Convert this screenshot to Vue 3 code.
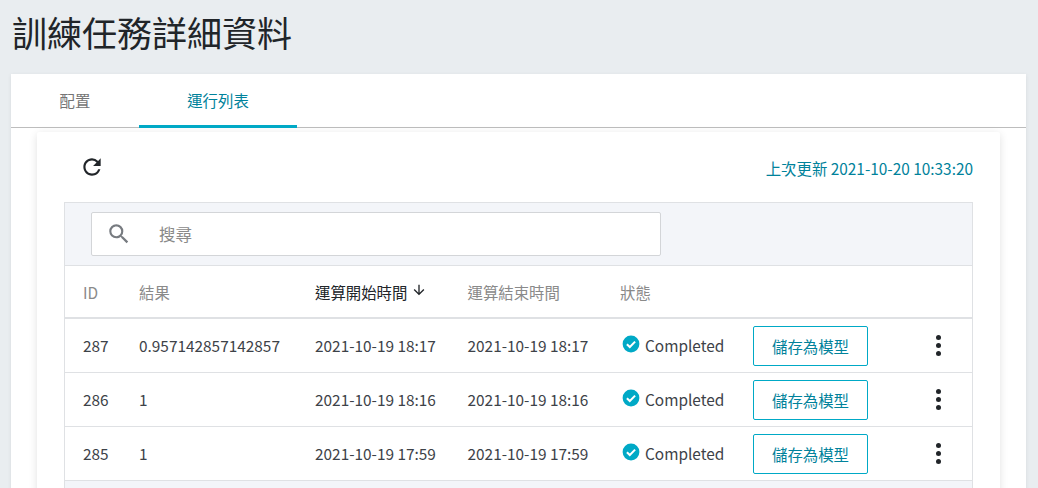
<script setup>
const rows = [
  { id: 287, result: '0.957142857142857', start: '2021-10-19 18:17', end: '2021-10-19 18:17' },
  { id: 286, result: '1', start: '2021-10-19 18:16', end: '2021-10-19 18:16' },
  { id: 285, result: '1', start: '2021-10-19 17:59', end: '2021-10-19 17:59' }
]
</script>

<template>
  <div class="page">
    <h1 class="title">訓練任務詳細資料</h1>
    <section class="card">
      <nav class="tabs">
        <div class="tab">配置</div>
        <div class="tab active">運行列表</div>
      </nav>
      <div class="inner">
        <div class="top">
          <svg class="refresh" viewBox="0 0 24 24" width="26" height="26"><path fill="#212529" d="M17.65 6.35A7.958 7.958 0 0 0 12 4c-4.42 0-7.99 3.58-7.99 8s3.57 8 7.99 8c3.73 0 6.84-2.55 7.73-6h-2.08A5.99 5.99 0 0 1 12 18c-3.31 0-6-2.69-6-6s2.69-6 6-6c1.66 0 3.14.69 4.22 1.78L13 11h7V4l-2.35 2.35z"/></svg>
          <div class="updated">上次更新 2021-10-20 10:33:20</div>
        </div>
        <div class="table">
          <div class="toolbar">
            <div class="search">
              <svg viewBox="0 0 24 24" width="26" height="26"><path fill="#777b80" d="M15.5 14h-.79l-.28-.27A6.471 6.471 0 0 0 16 9.5 6.5 6.5 0 1 0 9.5 16c1.61 0 3.09-.59 4.23-1.57l.27.28v.79l5 4.99L20.49 19l-4.99-5zm-6 0C7.01 14 5 11.99 5 9.5S7.01 5 9.5 5 14 7.01 14 9.5 11.99 14 9.5 14z"/></svg>
              <span class="placeholder">搜尋</span>
            </div>
          </div>
          <div class="row head">
            <div>ID</div>
            <div>結果</div>
            <div class="sorted">運算開始時間
              <svg viewBox="0 0 24 24" width="16" height="16"><path fill="#212529" d="M20 12l-1.41-1.41L13 16.17V4h-2v12.17l-5.58-5.59L4 12l8 8 8-8z"/></svg>
            </div>
            <div>運算結束時間</div>
            <div>狀態</div>
            <div></div>
            <div></div>
          </div>
          <div v-for="r in rows" :key="r.id" class="row body">
            <div>{{ r.id }}</div>
            <div>{{ r.result }}</div>
            <div>{{ r.start }}</div>
            <div>{{ r.end }}</div>
            <div class="status">
              <svg viewBox="0 0 18 18" width="18" height="18"><circle cx="9" cy="9" r="8.4" fill="#00a9c6"/><path d="M4.9 9.2l2.9 2.8 5.3-5.4" fill="none" stroke="#fff" stroke-width="2"/></svg>
              <span>Completed</span>
            </div>
            <div class="action"><button class="save">儲存為模型</button></div>
            <div class="dots"><i></i><i></i><i></i></div>
          </div>
          <div class="foot"></div>
        </div>
      </div>
    </section>
  </div>
</template>

<style scoped>
.page {
  height: 488px;
  overflow: hidden;
  box-sizing: border-box;
  padding: 0 12px 0 11px;
  background: #e9edf0;
  color: #212529;
  font-family: "Noto Sans CJK TC", "Noto Sans", sans-serif;
}
.title {
  margin: 0;
  height: 74px;
  padding: 6px 0 0 1px;
  box-sizing: border-box;
  font-size: 35px;
  line-height: 52px;
  font-weight: 400;
  color: #212529;
}
.card {
  height: 440px;
  background: #fff;
  box-shadow: 0 1px 4px rgba(0, 0, 0, 0.08);
}
.tabs {
  display: flex;
  height: 54px;
  box-sizing: border-box;
  border-bottom: 1px solid #bdbdbd;
}
.tab {
  width: 158px;
  height: 54px;
  box-sizing: border-box;
  text-align: center;
  font-size: 15.4px;
  line-height: 53px;
  color: #757575;
}
.tab:first-child { width: 128px; }
.tab.active {
  color: #00829b;
  border-bottom: 3px solid #00a9c6;
}
.inner {
  margin: 4px 26px 0 26px;
  padding: 0 27px;
  height: 400px;
  background: #fff;
  box-shadow: 0 2px 8px rgba(0, 0, 0, 0.12);
  border-radius: 2px;
}
.top {
  display: flex;
  justify-content: space-between;
  align-items: center;
  height: 70px;
  padding: 0 0 0 15px;
}
.refresh { margin: 0 0 0 0; }
.updated {
  font-size: 15.4px;
  color: #00829b;
  margin-top: 1px;
}
.table {
  border: 1px solid #dfe1e4;
  border-bottom: 0;
}
.toolbar {
  height: 62px;
  box-sizing: border-box;
  padding: 9px 26px;
  background: #f3f5f9;
}
.search {
  width: 570px;
  height: 44px;
  box-sizing: border-box;
  display: flex;
  align-items: center;
  gap: 27px;
  padding-left: 14px;
  background: #fff;
  border: 1px solid #d3d5d8;
  border-radius: 2px;
}
.placeholder {
  font-size: 16.5px;
  color: #8a8a8a;
  margin-top: -1px;
}
.row {
  display: grid;
  grid-template-columns: 56px 176px 152.5px 152.5px 133px 150px 1fr;
  align-items: center;
  padding-left: 18px;
  font-size: 15.4px;
  box-sizing: border-box;
}
.head {
  height: 54px;
  border-top: 1px solid #dfe1e4;
  border-bottom: 2px solid #dfe1e4;
  color: #8a8a8a;
}
.sorted {
  color: #212529;
  display: flex;
  align-items: center;
  gap: 4px;
}
.sorted svg { margin-top: -3px; }
.body {
  height: 54px;
  border-bottom: 1px solid #dfe1e4;
  color: #3d4248;
}
.body > div { margin-top: -2px; }
.body > .action, .body > .dots { margin-top: 0; }
.status {
  display: flex;
  align-items: center;
  gap: 5px;
  padding-left: 2px;
}
.status svg { margin-top: -1px; }
.save {
  width: 115px;
  height: 40px;
  padding: 0;
  background: #fff;
  border: 1px solid #00a9c6;
  border-radius: 2px;
  color: #00829b;
  font-family: inherit;
  font-size: 15.4px;
}
.dots {
  display: flex;
  flex-direction: column;
  gap: 3px;
  padding-left: 33px;
}
.dots i {
  display: block;
  width: 5px;
  height: 5px;
  border-radius: 50%;
  background: #212529;
}
.foot {
  height: 10px;
  background: #f3f5f9;
}
</style>
